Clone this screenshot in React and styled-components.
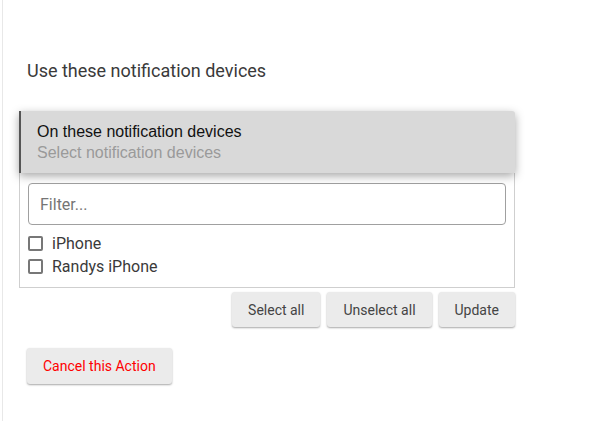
import React from 'react'
import styled, { createGlobalStyle } from 'styled-components'

const GlobalStyle = createGlobalStyle`
  body {
    margin: 0;
    background: #fff;
    font-family: Roboto, 'Liberation Sans', sans-serif;
  }
`

const Page = styled.div`
  margin-left: 2px;
  border-left: 1px solid #e8e8e8;
  min-height: 421px;
  box-sizing: border-box;
  padding: 60px 0 0 16px;
  width: 497px;
`

const Title = styled.div`
  padding-left: 8px;
  font-size: 18px;
  line-height: 22px;
  color: #3a3a3a;
  margin-bottom: 29px;
`

const Picker = styled.div`
  width: 496px;
`

const Header = styled.div`
  background: #d9d9d9;
  border-left: 2px solid #555;
  border-radius: 0 3px 3px 0;
  box-shadow: 0 3px 10px rgba(0, 0, 0, 0.35);
  padding: 10px 16px 11px 16px;
  font-family: 'Liberation Sans', Arial, sans-serif;
  font-size: 16px;
  line-height: 21px;
  height: 62px;
  box-sizing: border-box;
  position: relative;
  z-index: 1;
`

const HeaderTitle = styled.div`
  color: #111;
`

const HeaderHint = styled.div`
  color: #9a9a9a;
`

const Body = styled.div`
  margin: 0;
  border: 1px solid #cfcfcf;
  border-top: none;
  padding: 10px 8px 9px 8px;
`

const Filter = styled.input`
  display: block;
  width: 100%;
  box-sizing: border-box;
  height: 42px;
  border: 1px solid #a0a0a0;
  border-radius: 4px;
  padding: 0 11px;
  font-family: Roboto, sans-serif;
  font-size: 16px;
  color: #333;
  outline: none;
  &::placeholder {
    color: #757575;
  }
`

const List = styled.div`
  margin-top: 7px;
  display: flex;
  flex-direction: column;
`

const Row = styled.label`
  display: flex;
  align-items: center;
  height: 23px;
  font-size: 16px;
  color: #3a3a3a;
`

const Box = styled.span`
  width: 15px;
  height: 15px;
  box-sizing: border-box;
  border: 2px solid #777;
  border-radius: 2px;
  margin-right: 9px;
`

const Actions = styled.div`
  display: flex;
  justify-content: flex-end;
  gap: 7px;
  margin-top: 4px;
`

const Button = styled.button`
  height: ${(p) => p.$h || 35}px;
  padding: 0 16px;
  border: none;
  border-radius: 3px;
  background: #ebebeb;
  box-shadow: 0 1px 2px rgba(0, 0, 0, 0.35);
  font-family: Roboto, sans-serif;
  font-size: 14px;
  color: ${(p) => p.color || '#444'};
  cursor: pointer;
`

const CancelWrap = styled.div`
  margin: 21px 0 0 8px;
  display: flex;
`

const devices = ['iPhone', 'Randys iPhone']

export default function App() {
  return (
    <>
      <GlobalStyle />
      <Page>
        <Title>Use these notification devices</Title>
        <Picker>
          <Header>
            <HeaderTitle>On these notification devices</HeaderTitle>
            <HeaderHint>Select notification devices</HeaderHint>
          </Header>
          <Body>
            <Filter placeholder="Filter..." />
            <List>
              {devices.map((d) => (
                <Row key={d}>
                  <Box />
                  {d}
                </Row>
              ))}
            </List>
          </Body>
          <Actions>
            <Button>Select all</Button>
            <Button>Unselect all</Button>
            <Button>Update</Button>
          </Actions>
        </Picker>
        <CancelWrap>
          <Button color="#f00" $h={36}>Cancel this Action</Button>
        </CancelWrap>
      </Page>
    </>
  )
}
